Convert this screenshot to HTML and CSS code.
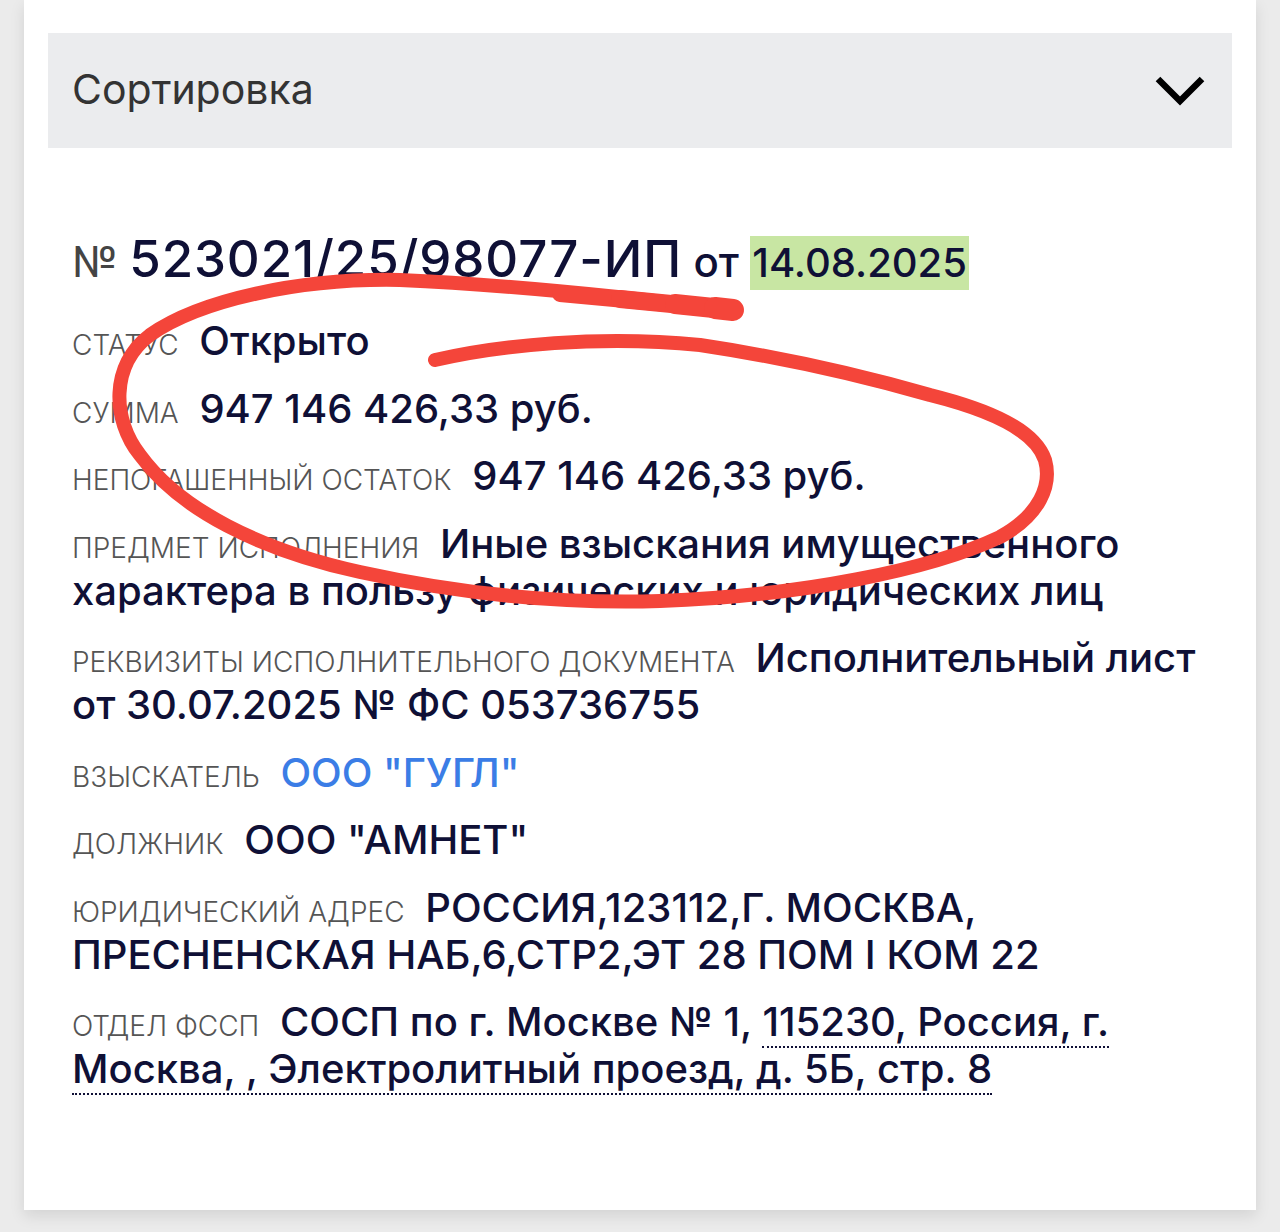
FILE: index.html
```html
<!DOCTYPE html>
<html lang="ru">
<head>
<meta charset="utf-8">
<title>Исполнительное производство</title>
<link rel="stylesheet" href="styles.css">
</head>
<body>
<div class="card">
  <div class="sort">
    <span class="sort-title">Сортировка</span>
    <svg class="chev" width="52" height="34" viewBox="0 0 52 34"><path d="M4 5 L26 27 L48 5" fill="none" stroke="#000" stroke-width="6.5"/></svg>
  </div>
  <div class="doc">
    <h1 class="head"><span class="no">№</span> <span class="num">523021/25/98077-ИП</span> <span class="ot">от</span> <span class="date">14.08.2025</span></h1>
    <p class="row"><span class="lbl">Статус</span> Открыто</p>
    <p class="row"><span class="lbl">Сумма</span> 947 146 426,33 руб.</p>
    <p class="row"><span class="lbl">Непогашенный остаток</span> 947 146 426,33 руб.</p>
    <p class="row"><span class="lbl">Предмет исполнения</span> <span>Иные взыскания имущественного</span> <span>характера в пользу физических и юридических лиц</span></p>
    <p class="row"><span class="lbl">Реквизиты исполнительного документа</span> <span>Исполнительный лист</span> <span>от 30.07.2025 № ФС 053736755</span></p>
    <p class="row"><span class="lbl">Взыскатель</span> <span class="link">ООО "ГУГЛ"</span></p>
    <p class="row"><span class="lbl">Должник</span> ООО "АМНЕТ"</p>
    <p class="row"><span class="lbl">Юридический адрес</span> <span>РОССИЯ,123112,Г. МОСКВА,</span> <span>ПРЕСНЕНСКАЯ НАБ,6,СТР2,ЭТ 28 ПОМ I КОМ 22</span></p>
    <p class="row"><span class="lbl">Отдел ФССП</span> <span>СОСП по г. Москве № 1,</span> <span class="addr">115230, Россия, г.</span> <span class="addr">Москва, , Электролитный проезд, д. 5Б, стр. 8</span></p>
  </div>
</div>
<svg class="mark" width="1280" height="1232" viewBox="0 0 1280 1232">
  <g fill="none" stroke="#f4453a" stroke-linecap="round" stroke-linejoin="round">
    <path d="M733,310 C 650,300 520,285 400,280 C 300,278 200,300 150,335 C 110,365 112,420 140,455 C 180,510 260,550 360,572 C 460,594 560,604 660,601 C 800,596 930,570 1000,537 C 1040,515 1052,485 1045,460 C 1035,430 990,410 930,395 C 860,375 780,357 700,345 C 600,335 500,345 435,360" stroke-width="14"/>
    <path d="M733,310 L 560,294" stroke-width="16"/>
    <path d="M733,310 L 620,299" stroke-width="18"/>
    <path d="M733,310 L 675,304" stroke-width="20"/>
    <path d="M733,310 L 715,308" stroke-width="22"/>
  </g>
</svg>
</body>
</html>
```

FILE: styles.css
```css
html, body {
  margin: 0;
  padding: 0;
}
body {
  background: #ebebeb;
  font-family: Inter, "Noto Sans", sans-serif;
  color: #0f1036;
  width: 1280px;
  height: 1232px;
  overflow: hidden;
  position: relative;
}
.card {
  margin: 0 24px;
  height: 1210px;
  box-sizing: border-box;
  background: #fff;
  padding: 33px 24px 0;
  box-shadow: 0 6px 14px rgba(0, 0, 0, 0.10);
}
.sort {
  height: 115px;
  background: #ebecee;
  display: flex;
  align-items: center;
  justify-content: space-between;
  padding: 0 26px 0 24px;
}
.sort-title {
  font-size: 41px;
  color: #333;
  font-weight: 400;
  margin-top: -3px;
}
.chev {
  display: block;
}
.doc {
  padding: 83px 24px 0;
}
.head {
  margin: 0 0 26px;
  font-weight: 400;
  font-size: 51px;
  line-height: 56px;
  white-space: nowrap;
  word-spacing: -3px;
}
.no {
  color: #444;
  font-size: 42px;
}
.num {
  font-weight: 500;
  letter-spacing: 0.9px;
}
.ot {
  font-size: 42px;
  font-weight: 500;
}
.date {
  background: #c8e6a3;
  padding: 2px 2px 3px;
  font-size: 40px;
  font-weight: 500;
}
.row {
  margin: 0 0 20.5px;
  font-size: 40px;
  line-height: 47px;
  font-weight: 500;
}
.lbl {
  font-size: 28px;
  line-height: 1;
  font-weight: 300;
  color: #555;
  text-transform: uppercase;
  margin-right: 10px;
}
.link {
  color: #3b7de6;
}
.addr {
  border-bottom: 2px dotted #0f1036;
}
.mark {
  position: absolute;
  left: 0;
  top: 0;
  pointer-events: none;
}
```
